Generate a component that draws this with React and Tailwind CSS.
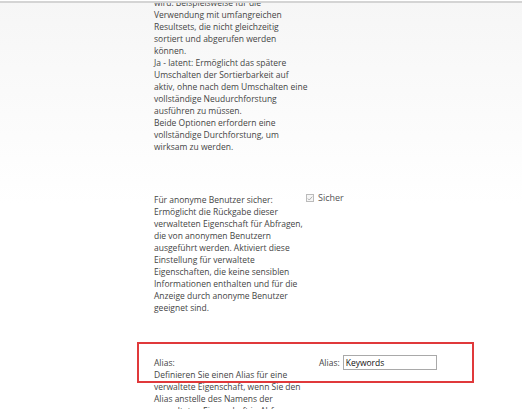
export default function App() {
  const block1 = [
    'wird. Beispielsweise für die',
    'Verwendung mit umfangreichen',
    'Resultsets, die nicht gleichzeitig',
    'sortiert und abgerufen werden',
    'können.',
    'Ja - latent: Ermöglicht das spätere',
    'Umschalten der Sortierbarkeit auf',
    'aktiv, ohne nach dem Umschalten eine',
    'vollständige Neudurchforstung',
    'ausführen zu müssen.',
    'Beide Optionen erfordern eine',
    'vollständige Durchforstung, um',
    'wirksam zu werden.',
  ]
  const block2 = [
    'Für anonyme Benutzer sicher:',
    'Ermöglicht die Rückgabe dieser',
    'verwalteten Eigenschaft für Abfragen,',
    'die von anonymen Benutzern',
    'ausgeführt werden. Aktiviert diese',
    'Einstellung für verwaltete',
    'Eigenschaften, die keine sensiblen',
    'Informationen enthalten und für die',
    'Anzeige durch anonyme Benutzer',
    'geeignet sind.',
  ]
  const block3 = [
    'Alias:',
    'Definieren Sie einen Alias für eine',
    'verwaltete Eigenschaft, wenn Sie den',
    'Alias anstelle des Namens der',
    'verwalteten Eigenschaft in Abfragen',
  ]

  return (
    <div className="relative w-[522px] h-[409px] overflow-hidden bg-gradient-to-b from-[#f6f6f6] via-white to-white text-[#454545] text-[8.5px] leading-[12px] font-['Open_Sans',sans-serif]">
      <div className="pl-[154px] mt-[-3px]">
        <div className="w-[150px]">
          {block1.map((l, i) => (
            <p key={i} className="whitespace-nowrap">{l}</p>
          ))}
        </div>

        <div className="flex mt-[41px]">
          <div className="w-[152px]">
            {block2.map((l, i) => (
              <p key={i} className="whitespace-nowrap">{l}</p>
            ))}
          </div>
          <label className="flex items-center gap-[4px] h-[12px] mt-[-2px] text-[#555] text-[9px]">
            <span className="w-[8px] h-[8px] border border-[#bbb] bg-[#f6f6f6] flex items-center justify-center">
              <svg viewBox="0 0 8 8" className="w-[7px] h-[7px]">
                <path d="M1 4 L3 6 L7 1.5" fill="none" stroke="#a8a8a8" strokeWidth="1.2" />
              </svg>
            </span>
            Sicher
          </label>
        </div>

        <div className="flex mt-[43px]">
          <div className="w-[165px]">
            {block3.map((l, i) => (
              <p key={i} className="whitespace-nowrap">{l}</p>
            ))}
          </div>
          <div className="flex items-center gap-[3px] h-[12px]">
            <span>Alias:</span>
            <div className="w-[94px] h-[15px] border border-[#a9a9a9] bg-white text-[#111] text-[8.5px] leading-[13px] pl-[2px] mt-[-2px]">
              Keywords
            </div>
          </div>
        </div>
      </div>

      <div className="absolute inset-x-0 top-0 h-[3px] bg-white">
        <div className="h-[2px] mt-px bg-[#d4d4d4]" />
      </div>

      <div className="absolute left-[137px] top-[342px] w-[337px] h-[41px] border-2 border-[#e0393b]" />
    </div>
  )
}
